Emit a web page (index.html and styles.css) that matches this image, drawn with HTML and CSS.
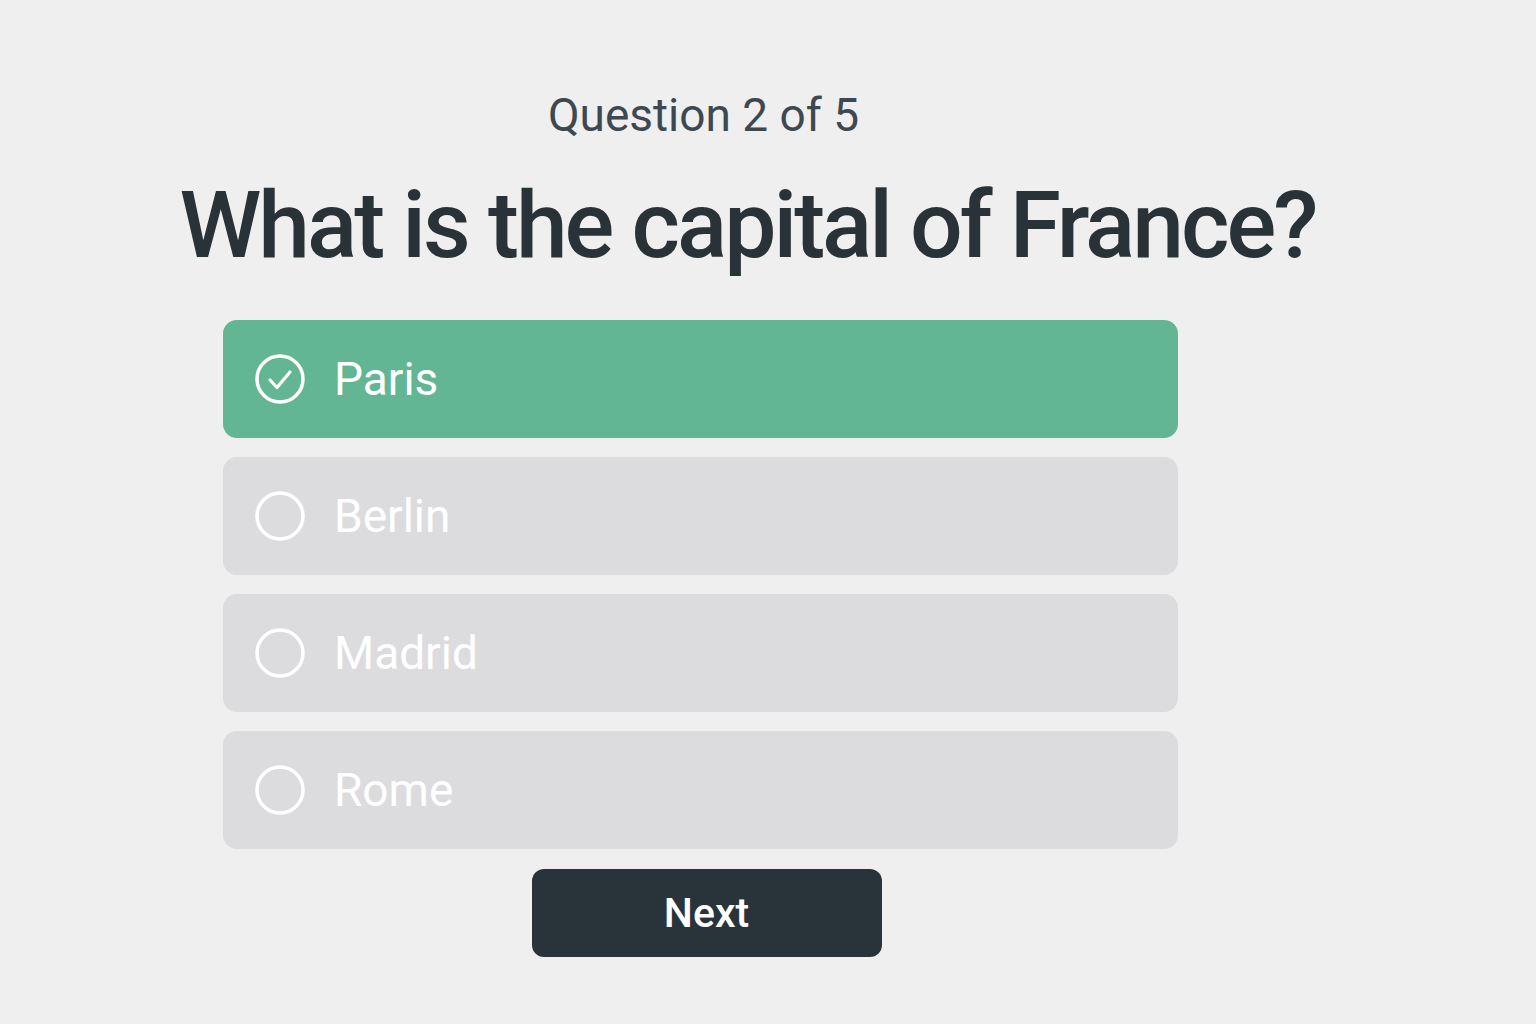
FILE: index.html
```html
<!DOCTYPE html>
<html lang="en">
<head>
<meta charset="utf-8">
<title>Quiz</title>
<link rel="stylesheet" href="styles.css">
</head>
<body>
<main class="quiz">
  <p class="progress">Question 2 of 5</p>
  <h1 class="question">What is the capital of France?</h1>
  <ul class="options">
    <li class="option selected">
      <svg class="mark" viewBox="0 0 52 52" width="52" height="52"><circle cx="26" cy="26" r="23" fill="none" stroke="#fff" stroke-width="3.5"/><path d="M16 27 L23 34.5 L36 19" fill="none" stroke="#fff" stroke-width="3.2" stroke-linecap="round" stroke-linejoin="round"/></svg>
      <span class="label">Paris</span>
    </li>
    <li class="option">
      <svg class="mark" viewBox="0 0 52 52" width="52" height="52"><circle cx="26" cy="26" r="23" fill="none" stroke="#fff" stroke-width="3.5"/></svg>
      <span class="label">Berlin</span>
    </li>
    <li class="option">
      <svg class="mark" viewBox="0 0 52 52" width="52" height="52"><circle cx="26" cy="26" r="23" fill="none" stroke="#fff" stroke-width="3.5"/></svg>
      <span class="label">Madrid</span>
    </li>
    <li class="option">
      <svg class="mark" viewBox="0 0 52 52" width="52" height="52"><circle cx="26" cy="26" r="23" fill="none" stroke="#fff" stroke-width="3.5"/></svg>
      <span class="label">Rome</span>
    </li>
  </ul>
  <div class="actions"><button class="next">Next</button></div>
</main>
</body>
</html>
```

FILE: styles.css
```css
* { box-sizing: border-box; }
html, body { margin: 0; padding: 0; }
body {
  background: #efefef;
  font-family: Roboto, "Noto Sans", "Liberation Sans", sans-serif;
  width: 1536px;
  height: 1024px;
  overflow: hidden;
}
.quiz {
  width: 955px;
  margin-left: 223px;
  padding-top: 86px;
  display: flex;
  flex-direction: column;
}
.progress {
  margin: 0;
  text-align: center;
  font-size: 46px;
  line-height: 58px;
  color: #3d4850;
  padding-left: 6px;
}
.question {
  margin: 32px -184px 0 -90px;
  text-align: center;
  white-space: nowrap;
  font-family: Roboto, "Noto Sans", sans-serif;
  font-weight: 500;
  font-size: 93px;
  line-height: 100px;
  letter-spacing: -3px;
  color: #283237;
}
.options {
  list-style: none;
  margin: 44px 0 0;
  padding: 0;
  display: flex;
  flex-direction: column;
  gap: 19px;
}
.option {
  height: 118px;
  border-radius: 14px;
  background: #dcdcde;
  display: flex;
  align-items: center;
  padding-left: 31px;
  gap: 28px;
  color: #fff;
}
.option.selected { background: #62b693; }
.mark { flex: none; }
.label {
  font-size: 46px;
  line-height: 1;
  font-weight: 400;
}
.actions {
  display: flex;
  justify-content: center;
  margin-top: 20px;
  padding-left: 12px;
}
.next {
  width: 350px;
  height: 88px;
  border: none;
  border-radius: 12px;
  background: #28343a;
  color: #fff;
  font-family: Roboto, "Noto Sans", sans-serif;
  font-weight: 500;
  font-size: 41px;
  cursor: pointer;
}
```
